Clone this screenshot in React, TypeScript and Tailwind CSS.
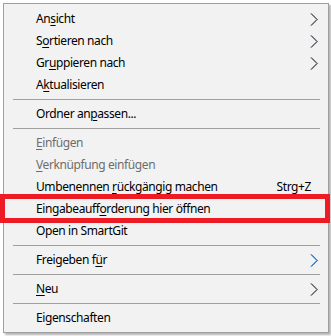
import React from "react";

type Item =
  | { kind: "sep" }
  | {
      kind: "item";
      pre: string;
      u?: string;
      post?: string;
      disabled?: boolean;
      arrow?: "brown" | "blue";
      shortcut?: string;
    };

const items: Item[] = [
  { kind: "item", pre: "An", u: "s", post: "icht", arrow: "brown" },
  { kind: "item", pre: "S", u: "o", post: "rtieren nach", arrow: "brown" },
  { kind: "item", pre: "Gr", u: "u", post: "ppieren nach", arrow: "brown" },
  { kind: "item", pre: "A", u: "k", post: "tualisieren" },
  { kind: "sep" },
  { kind: "item", pre: "Ordner an", u: "p", post: "assen..." },
  { kind: "sep" },
  { kind: "item", pre: "", u: "E", post: "infügen", disabled: true },
  { kind: "item", pre: "", u: "V", post: "erknüpfung einfügen", disabled: true },
  { kind: "item", pre: "Umbenennen ", u: "r", post: "ückgängig machen", shortcut: "Strg+Z" },
  { kind: "item", pre: "Eingabeauff", u: "o", post: "rderung hier öffnen" },
  { kind: "item", pre: "Open in SmartGit" },
  { kind: "sep" },
  { kind: "item", pre: "Freigeben f", u: "ü", post: "r", arrow: "blue" },
  { kind: "sep" },
  { kind: "item", pre: "", u: "N", post: "eu", arrow: "brown" },
  { kind: "sep" },
  { kind: "item", pre: "Eigenschaften" },
];

function Chevron({ tone }: { tone: "brown" | "blue" }) {
  const main = tone === "blue" ? "#2f6fb5" : "#5a3a1a";
  const fringeL = tone === "blue" ? "#4a90d9" : "#c07020";
  const fringeR = tone === "blue" ? "#1f4f8f" : "#3c8ee0";
  return (
    <svg width="9" height="13" viewBox="0 0 9 13" className="block">
      <polyline points="0.6,0.5 6.6,6.5 0.6,12.5" fill="none" stroke={fringeL} strokeWidth="0.7" />
      <polyline points="1.6,0.5 7.6,6.5 1.6,12.5" fill="none" stroke={fringeR} strokeWidth="0.7" />
      <polyline points="1.1,0.5 7.1,6.5 1.1,12.5" fill="none" stroke={main} strokeWidth="0.9" />
    </svg>
  );
}

export default function App() {
  return (
    <div
      className="relative w-[331px] h-[336px] bg-white overflow-hidden"
      style={{ fontFamily: '"Noto Sans", "Open Sans", Arial, sans-serif' }}
    >
      <div className="absolute left-[3px] top-[3px] w-[326px] border border-[#a0a0a0] bg-[#f2f2f2] pt-[4px] pb-[3px] shadow-[2px_2px_2px_rgba(0,0,0,0.3)]">
        {items.map((it, i) =>
          it.kind === "sep" ? (
            <div key={i} className="h-[7px] flex items-center pl-[9px] pr-[8px]">
              <div className="h-px w-full bg-[#a0a0a0]" />
            </div>
          ) : (
            <div
              key={i}
              className={`h-[22px] flex items-center pl-[32px] pr-[9px] text-[12px] leading-none tracking-[-0.4px] ${
                it.disabled ? "text-[#6d6d6d]" : "text-black"
              }`}
            >
              <span className="flex-1 whitespace-pre">
                {it.pre}
                {it.u && <span className="underline underline-offset-[2px] decoration-1">{it.u}</span>}
                {it.post}
              </span>
              {it.shortcut && <span className="mr-[8px]">{it.shortcut}</span>}
              {it.arrow && <Chevron tone={it.arrow} />}
            </div>
          )
        )}
      </div>
      <div className="absolute left-0 top-[194px] w-[330px] h-[29px] border-[5px] border-[#ed1c24]" />
    </div>
  );
}
